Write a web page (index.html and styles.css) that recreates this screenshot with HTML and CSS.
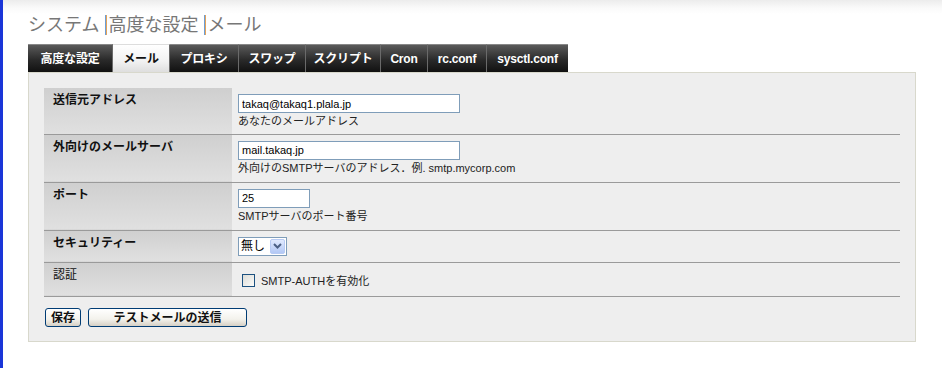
FILE: index.html
```html
<!DOCTYPE html>
<html lang="ja">
<head>
    <meta charset="UTF-8">
    <title>システム | 高度な設定 | メール</title>
    <link rel="stylesheet" href="styles.css">
</head>
<body>
    <div class="page">
        <!-- Title -->
        <h1 class="title">システム<span class="sep"></span>高度な設定<span class="sep"></span>メール</h1>

        <!-- Tabs -->
        <ul class="tabs">
            <li class="tab">高度な設定</li>
            <li class="tab active">メール</li>
            <li class="tab">プロキシ</li>
            <li class="tab">スワップ</li>
            <li class="tab">スクリプト</li>
            <li class="tab">Cron</li>
            <li class="tab">rc.conf</li>
            <li class="tab">sysctl.conf</li>
        </ul>

        <!-- Settings panel -->
        <div class="panel">
            <table class="form">
                <tr class="row-1">
                    <td class="label">送信元アドレス</td>
                    <td class="value">
                        <input class="text wide" type="text" value="takaq@takaq1.plala.jp"><br>
                        <span class="help">あなたのメールアドレス</span>
                    </td>
                </tr>
                <tr class="row-2">
                    <td class="label">外向けのメールサーバ</td>
                    <td class="value">
                        <input class="text wide" type="text" value="mail.takaq.jp"><br>
                        <span class="help">外向けのSMTPサーバのアドレス．例. smtp.mycorp.com</span>
                    </td>
                </tr>
                <tr class="row-3">
                    <td class="label">ポート</td>
                    <td class="value">
                        <input class="text short" type="text" value="25"><br>
                        <span class="help">SMTPサーバのポート番号</span>
                    </td>
                </tr>
                <tr class="row-4">
                    <td class="label">セキュリティー</td>
                    <td class="value">
                        <div class="select">
                            <select>
                                <option>無し</option>
                                <option>SSL</option>
                                <option>TLS</option>
                            </select>
                            <span class="select-btn">
                                <svg width="9" height="6" viewBox="0 0 9 6"><path d="M1 1 L4.5 4.5 L8 1" fill="none" stroke="#4d6185" stroke-width="2"/></svg>
                            </span>
                        </div>
                    </td>
                </tr>
                <tr class="row-5">
                    <td class="label plain">認証</td>
                    <td class="value">
                        <label class="check"><input type="checkbox"> SMTP-AUTHを有効化</label>
                    </td>
                </tr>
            </table>

            <div class="actions">
                <button class="btn">保存</button>
                <button class="btn btn-wide">テストメールの送信</button>
            </div>
        </div>
    </div>
</body>
</html>
```

FILE: styles.css
```css
* {
    margin: 0;
    padding: 0;
    box-sizing: border-box;
}

body {
    font-family: Tahoma, "Liberation Sans", "Noto Sans CJK JP", sans-serif;
    font-size: 12px;
    color: #222;
    background: linear-gradient(#ececec 0, #fafafa 8px, #ffffff 14px);
    height: 368px;
    overflow: hidden;
}

.page {
    height: 100%;
    border-left: 3px solid #1a35d8;
    padding: 12px 0 0 25px;
}

/* Title */
.title {
    font-family: "Noto Sans CJK JP", sans-serif;
    font-weight: 400;
    font-size: 18px;
    line-height: 22px;
    color: #777;
    height: 32px;
}

.title .sep {
    display: inline-block;
    width: 2px;
    height: 20px;
    margin: 0 1px 0 6px;
    vertical-align: -4px;
    background: linear-gradient(90deg, #6c9ed6 50%, #e3a35a 50%);
}

/* Tabs */
.tabs {
    list-style: none;
    display: flex;
}

.tab {
    height: 28px;
    line-height: 28px;
    text-align: center;
    font-weight: bold;
    color: #fff;
    background: linear-gradient(#5a5a5a, #2a2a2a 55%, #111);
    border-right: 1px solid #6a6a6a;
    border-top: 1px solid #888;
    white-space: nowrap;
    letter-spacing: -0.2px;
}

.tab:nth-child(1) { width: 85px; }
.tab:nth-child(2) { width: 57px; }
.tab:nth-child(3) { width: 69px; }
.tab:nth-child(4) { width: 67px; }
.tab:nth-child(5) { width: 75px; }
.tab:nth-child(6) { width: 47px; }
.tab:nth-child(7) { width: 59px; }
.tab:nth-child(8) { width: 81px; border-right: none; }

.tab.active {
    color: #111;
    background: linear-gradient(#ffffff, #f2f2f2 60%, #dedede);
    border-top-color: #ddd;
}

/* Panel */
.panel {
    width: 888px;
    height: 270px;
    background: #eeeeee;
    border: 1px solid #d8d8cc;
    padding: 15px 15px 0 15px;
}

.form {
    width: 856px;
    border-collapse: collapse;
}

.form td {
    border-bottom: 1px solid #9a9a9a;
    vertical-align: top;
}

.form .label {
    width: 188px;
    padding: 5px 9px 0;
    font-weight: bold;
    line-height: 14px;
    color: #111;
    background: linear-gradient(#cfcfcf, #e0e0e0);
}

.form .label.plain {
    font-weight: normal;
}

.form .value {
    padding: 6px 6px 0;
    line-height: 14px;
}

.row-1 td { height: 46px; }
.row-2 td { height: 48px; }
.row-3 td { height: 48px; }
.row-4 td { height: 32px; }
.row-5 td { height: 34px; }

.help {
    display: inline-block;
    margin-top: 1px;
    font-size: 11px;
}

.text {
    height: 19px;
    border: 1px solid #7f9db9;
    background: #fff;
    padding: 0 3px;
    font-family: inherit;
    font-size: 11px;
    color: #000;
}

.text.wide { width: 222px; }
.text.short { width: 72px; }

/* Select, XP style */
.select {
    position: relative;
    width: 49px;
    height: 19px;
    border: 1px solid #7f9db9;
    background: #fff;
}

.select select {
    appearance: none;
    -webkit-appearance: none;
    border: none;
    outline: none;
    background: transparent;
    width: 100%;
    height: 17px;
    padding: 0 0 0 2px;
    font-family: inherit;
    font-size: 12px;
    color: #000;
}

.select-btn {
    position: absolute;
    top: 1px;
    right: 1px;
    width: 15px;
    height: 15px;
    display: flex;
    align-items: center;
    justify-content: center;
    border-radius: 2px;
    background: linear-gradient(#e1eafe, #b3c8f5);
    border: 1px solid #b8cbf4;
}

/* Checkbox */
.check {
    display: flex;
    align-items: center;
    gap: 6px;
    margin-top: 5px;
    padding-left: 4px;
    font-size: 11px;
}

.check input {
    appearance: none;
    -webkit-appearance: none;
    width: 13px;
    height: 13px;
    border: 1px solid #1c5180;
    background: linear-gradient(135deg, #dcdcd7, #fbfbf9);
}

/* Buttons */
.actions {
    display: flex;
    gap: 7px;
    margin-top: 11px;
    padding-left: 1px;
}

.btn {
    height: 19px;
    width: 36px;
    font-family: "Noto Sans CJK JP", sans-serif;
    font-weight: bold;
    font-size: 12px;
    line-height: 16px;
    color: #111;
    border: 1px solid #003c74;
    border-radius: 3px;
    background: linear-gradient(#ffffff, #f3f2ec 60%, #d6d0c5);
}

.btn-wide {
    width: 159px;
}
```
